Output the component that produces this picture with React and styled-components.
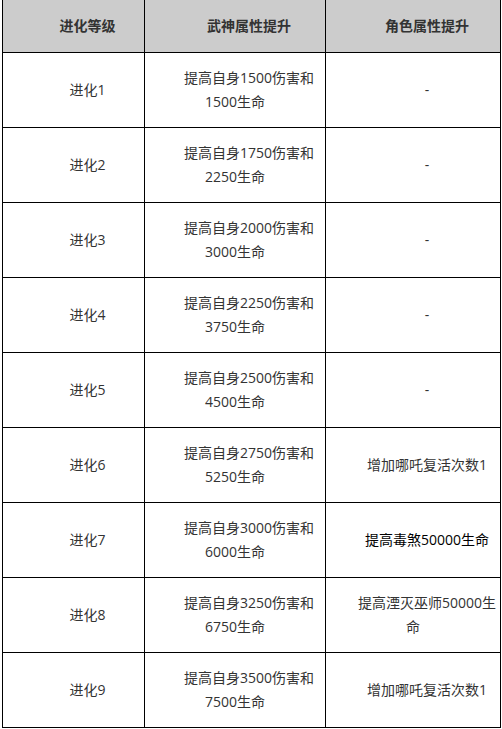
import React from 'react';
import styled, {createGlobalStyle} from 'styled-components';

const GlobalStyle = createGlobalStyle`
    body {
        margin: 0;
        background: #ffffff;
        font-family: "Open Sans", "Noto Sans CJK SC", sans-serif;
    }
`

const Wrapper = styled.div`
    padding-left: 2px;
`

const Grid = styled.div`
    display: grid;
    grid-template-columns: 142px 181px 175px;
    width: max-content;
    border-left: 1px solid #000;
`

const Cell = styled.div`
    display: flex;
    align-items: center;
    justify-content: center;
    height: ${props => props.$head ? '52px' : '74px'};
    border-right: 1px solid #000;
    border-bottom: 1px solid #000;
    background: ${props => props.$head ? '#cccccc' : '#ffffff'};
    color: ${props => props.$dark ? '#000000' : '#333333'};
    font-size: 14px;
    font-weight: ${props => props.$head ? 'bold' : 'normal'};
`

const CellText = styled.div`
    text-align: center;
    line-height: 24px;
    white-space: nowrap;
`

// first line carries the 2em indent the article uses on every paragraph
const Line = styled.div`
    padding-left: ${props => props.$first ? '2em' : '0'};
`

const headers = ["进化等级", "武神属性提升", "角色属性提升"]

const rows = [
    {level: "进化1", wushen: ["提高自身1500伤害和", "1500生命"], role: ["-"]},
    {level: "进化2", wushen: ["提高自身1750伤害和", "2250生命"], role: ["-"]},
    {level: "进化3", wushen: ["提高自身2000伤害和", "3000生命"], role: ["-"]},
    {level: "进化4", wushen: ["提高自身2250伤害和", "3750生命"], role: ["-"]},
    {level: "进化5", wushen: ["提高自身2500伤害和", "4500生命"], role: ["-"]},
    {level: "进化6", wushen: ["提高自身2750伤害和", "5250生命"], role: ["增加哪吒复活次数1"]},
    {level: "进化7", wushen: ["提高自身3000伤害和", "6000生命"], role: ["提高毒煞50000生命"], dark: true},
    {level: "进化8", wushen: ["提高自身3250伤害和", "6750生命"], role: ["提高湮灭巫师50000生", "命"]},
    {level: "进化9", wushen: ["提高自身3500伤害和", "7500生命"], role: ["增加哪吒复活次数1"]},
]

const Lines = ({lines}) => (
    <CellText>
        {lines.map((line, i) => (
            <Line $first={i === 0} key={i}>{line}</Line>
        ))}
    </CellText>
)

const App = () => (
    <Wrapper>
        <GlobalStyle />
        <Grid>
            {headers.map(h => (
                <Cell $head key={h}><Lines lines={[h]} /></Cell>
            ))}
            {rows.map(row => (
                <React.Fragment key={row.level}>
                    <Cell><Lines lines={[row.level]} /></Cell>
                    <Cell><Lines lines={row.wushen} /></Cell>
                    <Cell $dark={row.dark}><Lines lines={row.role} /></Cell>
                </React.Fragment>
            ))}
        </Grid>
    </Wrapper>
)

export default App;
